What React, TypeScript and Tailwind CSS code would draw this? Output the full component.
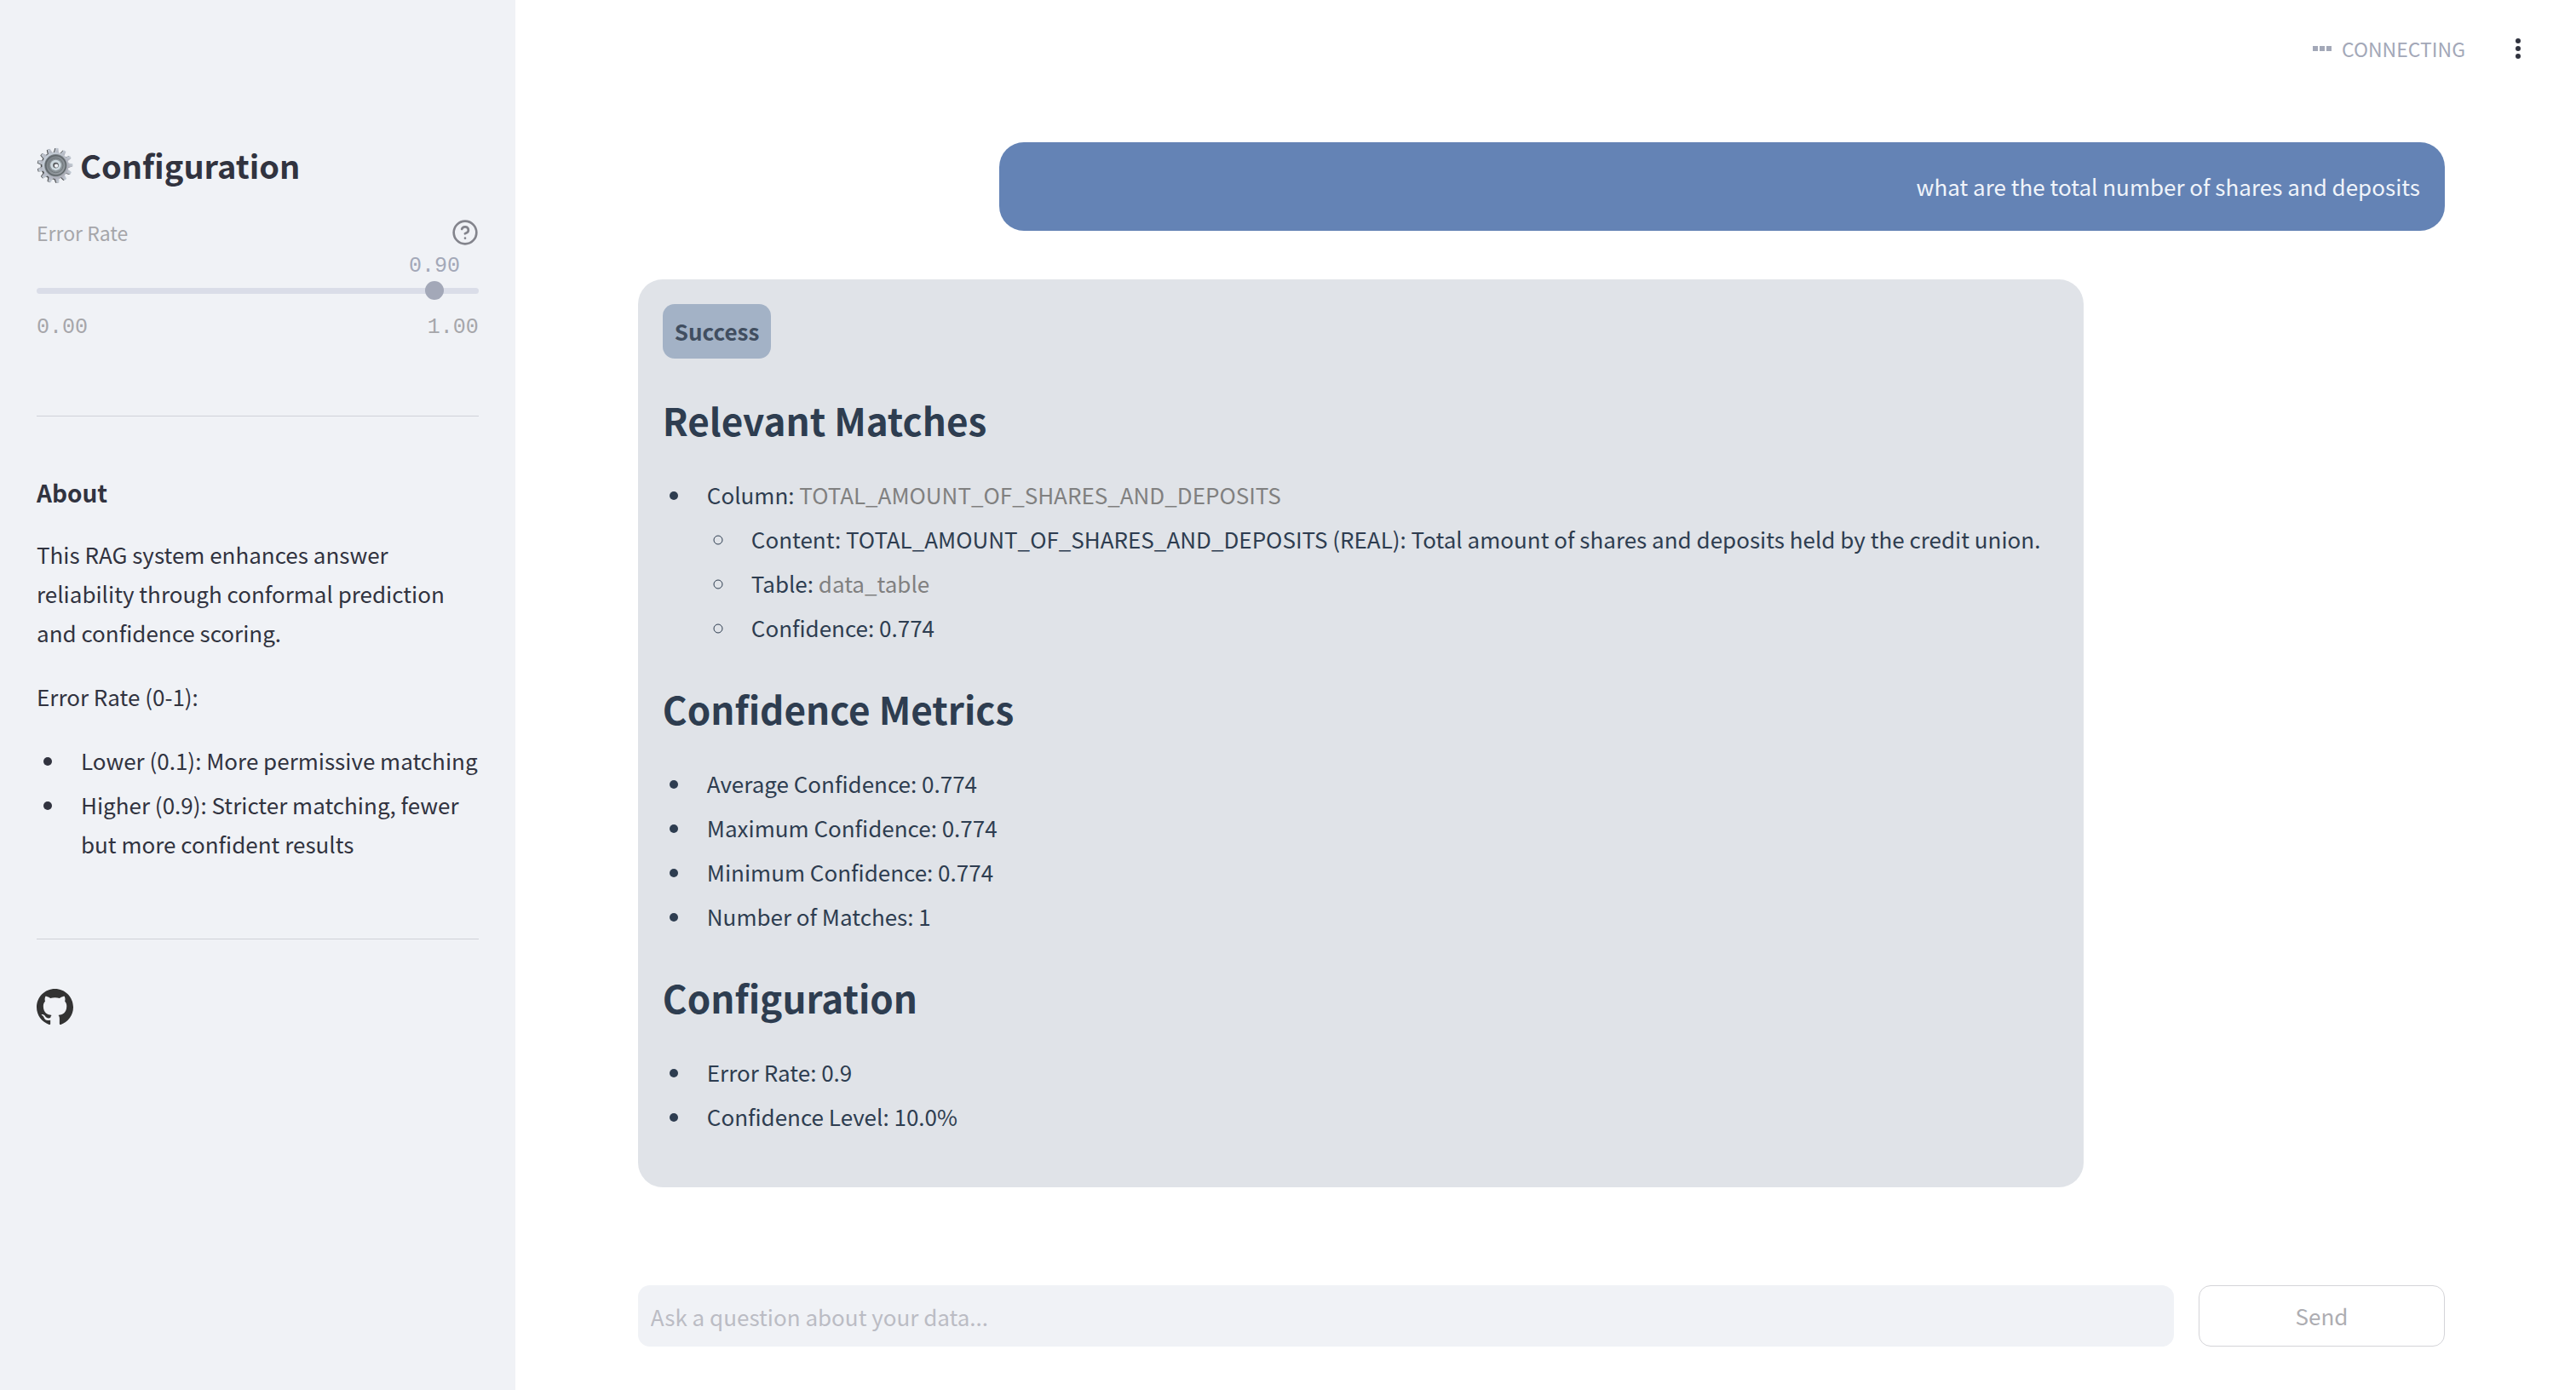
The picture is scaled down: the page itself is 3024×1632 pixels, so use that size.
import { useState } from "react";
import type { ReactNode } from "react";

const TEETH = Array.from({ length: 13 }, (_, i) => (i * 360) / 13);

function GearIcon() {
  return (
    <svg viewBox="0 0 44 44" className="size-[43px] shrink-0" aria-hidden="true">
      <defs>
        <linearGradient id="gear-body" x1="0" y1="0" x2="1" y2="1">
          <stop offset="0" stopColor="#c9d3dc" />
          <stop offset="1" stopColor="#a9a9b4" />
        </linearGradient>
        <linearGradient id="gear-dish" x1="0" y1="0" x2="1" y2="1">
          <stop offset="0" stopColor="#6f767c" />
          <stop offset="1" stopColor="#a0a6ab" />
        </linearGradient>
      </defs>
      <g fill="#4d4f50">
        {TEETH.map((a) => (
          <path key={a} d="M18.4 8 L19.6 1.2 H23 L24.4 8 Z" transform={`rotate(${a + 6} 21.4 22)`} />
        ))}
        <circle cx="21.2" cy="22.3" r="16.3" />
      </g>
      <g fill="url(#gear-body)">
        {TEETH.map((a) => (
          <path key={a} d="M19.5 8 L20.7 0.8 H23.9 L25.2 8 Z" transform={`rotate(${a + 6} 22.4 21.8)`} />
        ))}
        <circle cx="22.6" cy="21.8" r="16" />
      </g>
      <circle cx="23" cy="21.8" r="13.6" fill="url(#gear-dish)" />
      <circle cx="23" cy="21.8" r="12" fill="none" stroke="#5d6468" strokeWidth="1.4" />
      <circle cx="23.2" cy="21.8" r="8.6" fill="#8c9499" stroke="#70777b" strokeWidth="1" />
      <circle cx="23" cy="21.4" r="6.4" fill="#cdd9df" />
      <circle cx="23" cy="21.6" r="3.4" fill="#5a5d60" />
      <circle cx="23.6" cy="22.2" r="2.2" fill="#f0f2f6" />
    </svg>
  );
}

function HelpIcon() {
  return (
    <svg viewBox="0 0 24 24" className="size-[32px]" fill="none" stroke="currentColor" strokeWidth="2" strokeLinecap="round" strokeLinejoin="round" aria-hidden="true">
      <circle cx="12" cy="12" r="10" />
      <path d="M9.09 9a3 3 0 0 1 5.83 1c0 2-3 3-3 3" />
      <path d="M12 17h.01" />
    </svg>
  );
}

function GitHubIcon() {
  return (
    <svg viewBox="0 0 16 16" className="size-[43px]" fill="currentColor" aria-hidden="true">
      <path d="M8 0C3.58 0 0 3.58 0 8c0 3.54 2.29 6.53 5.47 7.59.4.07.55-.17.55-.38 0-.19-.01-.82-.01-1.49-2.01.37-2.53-.49-2.69-.94-.09-.23-.48-.94-.82-1.13-.28-.15-.68-.52-.01-.53.63-.01 1.08.58 1.23.82.72 1.21 1.87.87 2.33.66.07-.52.28-.87.51-1.07-1.78-.2-3.64-.89-3.64-3.95 0-.87.31-1.59.82-2.15-.08-.2-.36-1.02.08-2.12 0 0 .67-.21 2.2.82.64-.18 1.32-.27 2-.27s1.36.09 2 .27c1.53-1.04 2.2-.82 2.2-.82.44 1.1.16 1.92.08 2.12.51.56.82 1.27.82 2.15 0 3.07-1.87 3.75-3.65 3.95.29.25.54.73.54 1.48 0 1.07-.01 1.93-.01 2.2 0 .21.15.46.55.38A8.01 8.01 0 0 0 16 8c0-4.42-3.58-8-8-8z" />
    </svg>
  );
}

function BulletList({ children }: { children: ReactNode }) {
  return <ul className="flex list-disc flex-col gap-[6px] pl-[35px]">{children}</ul>;
}

function Item({ children }: { children: ReactNode }) {
  return <li className="pl-[17px]">{children}</li>;
}

function ErrorRateSlider() {
  const [value, setValue] = useState(0.9);
  return (
    <div>
      <div className="flex h-[46px] items-center justify-between">
        <label htmlFor="error-rate" className="text-[23px] text-[#a6a6aa]">
          Error Rate
        </label>
        <button type="button" aria-label="Help" className="text-[#83848c]">
          <HelpIcon />
        </button>
      </div>
      <div className="pt-[2px] font-['Liberation_Mono',monospace] text-[25px] leading-[30px]">
        <div className="relative h-[28px] text-[#a3a8b8]">
          <output htmlFor="error-rate" className="absolute -translate-x-1/2" style={{ left: `${value * 100}%` }}>
            {value.toFixed(2)}
          </output>
        </div>
        <div className="relative flex h-[30px] items-center">
          <div className="h-[7px] w-full rounded-full bg-[#dadde8]" />
          <input
            id="error-rate"
            type="range"
            min={0}
            max={1}
            step={0.05}
            value={value}
            onChange={(e) => setValue(Number(e.target.value))}
            className="absolute -inset-x-[11px] top-0 h-[30px] appearance-none bg-transparent [&::-webkit-slider-thumb]:size-[22px] [&::-webkit-slider-thumb]:appearance-none [&::-webkit-slider-thumb]:rounded-full [&::-webkit-slider-thumb]:bg-[#a3a8b8]"
          />
        </div>
        <div className="flex justify-between pt-[14px] text-[#a6a6aa]">
          <span>0.00</span>
          <span>1.00</span>
        </div>
      </div>
    </div>
  );
}

function Sidebar() {
  return (
    <aside className="w-1/5 shrink-0 bg-[#f0f2f6] px-[43px] pt-[168px] text-[#31333f]">
      <h2 className="flex items-center gap-2 text-[38px] leading-[52px] font-bold">
        <GearIcon />
        Configuration
      </h2>
      <div className="pt-[30px]">
        <ErrorRateSlider />
      </div>
      <hr className="mt-[88px] border-[#d0d2d8]" />
      <h3 className="pt-[66px] text-[28px] leading-[46px] font-bold">About</h3>
      <p className="pt-[27px]">
        This RAG system enhances answer reliability through conformal prediction and confidence scoring.
      </p>
      <p className="py-[29px]">Error Rate (0-1):</p>
      <BulletList>
        <Item>Lower (0.1): More permissive matching</Item>
        <Item>Higher (0.9): Stricter matching, fewer but more confident results</Item>
      </BulletList>
      <hr className="mt-[88px] border-[#d0d2d8]" />
      <a href="https://github.com" aria-label="GitHub" className="mt-[58px] inline-block text-[#333333]">
        <GitHubIcon />
      </a>
    </aside>
  );
}

function Header() {
  return (
    <header className="flex h-[113px] items-center justify-end pr-[64px] text-[#a3a8b8]">
      <svg viewBox="0 0 22 6" className="h-[6px] w-[22px]" fill="currentColor" aria-hidden="true">
        <path d="M0 0h6v6H0zM8 0h6v6H8zM16 0h6v6h-6z" />
      </svg>
      <span className="pl-3 text-[23px]">CONNECTING</span>
      <button type="button" aria-label="Menu" className="ml-[58px] text-[#31333f]">
        <svg viewBox="0 0 8 24" className="h-[24px] w-[8px]" fill="currentColor" aria-hidden="true">
          <circle cx="4" cy="3" r="3" />
          <circle cx="4" cy="12" r="3" />
          <circle cx="4" cy="21" r="3" />
        </svg>
      </button>
    </header>
  );
}

function SectionTitle({ children }: { children: ReactNode }) {
  return <h2 className="pt-[41px] pb-[34px] text-[44px] leading-[62px] font-bold">{children}</h2>;
}

function Answer() {
  return (
    <article className="mt-[57px] w-4/5 rounded-[29px] bg-[#e0e3e8] px-[29px] pt-[29px] pb-[60px] text-[#2e3d50]">
      <div className="w-fit rounded-[14px] bg-[#a3b2c6] px-[14px] py-[9px] font-bold text-[#414e60]">Success</div>
      <SectionTitle>Relevant Matches</SectionTitle>
      <BulletList>
        <Item>
          Column: <span className="text-[#808080]">TOTAL_AMOUNT_OF_SHARES_AND_DEPOSITS</span>
          <ul className="flex list-[circle] flex-col gap-[6px] pt-[6px] pl-[35px]">
            <Item>
              Content: TOTAL_AMOUNT_OF_SHARES_AND_DEPOSITS (REAL): Total amount of shares and deposits held by the credit
              union.
            </Item>
            <Item>
              Table: <span className="text-[#808080]">data_table</span>
            </Item>
            <Item>Confidence: 0.774</Item>
          </ul>
        </Item>
      </BulletList>
      <SectionTitle>Confidence Metrics</SectionTitle>
      <BulletList>
        <Item>Average Confidence: 0.774</Item>
        <Item>Maximum Confidence: 0.774</Item>
        <Item>Minimum Confidence: 0.774</Item>
        <Item>Number of Matches: 1</Item>
      </BulletList>
      <SectionTitle>Configuration</SectionTitle>
      <BulletList>
        <Item>Error Rate: 0.9</Item>
        <Item>Confidence Level: 10.0%</Item>
      </BulletList>
    </article>
  );
}

export default function App() {
  return (
    <div className="flex min-h-screen bg-white font-['Noto_Sans_CJK_SC',sans-serif] text-[26px] leading-[46px]">
      <Sidebar />
      <div className="flex min-w-0 flex-1 flex-col">
        <Header />
        <main className="pt-[54px] pr-[154px] pb-[50px] pl-36">
          <div className="ml-auto w-4/5 rounded-[29px] bg-[#6483b5] p-[29px] text-right text-[#f0f4fa]">
            what are the total number of shares and deposits
          </div>
          <Answer />
          <form className="mt-[115px] flex gap-[29px]" onSubmit={(e) => e.preventDefault()}>
            <input
              type="text"
              aria-label="Question"
              placeholder="Ask a question about your data..."
              className="h-[72px] min-w-0 flex-1 rounded-[14px] bg-[#f0f2f6] px-[15px] text-[#31333f] placeholder:text-[#bbbcc4]"
            />
            <button type="submit" className="h-[72px] w-[289px] rounded-[14px] border border-[#d4d4d8] text-[#adadb2]">
              Send
            </button>
          </form>
        </main>
      </div>
    </div>
  );
}
